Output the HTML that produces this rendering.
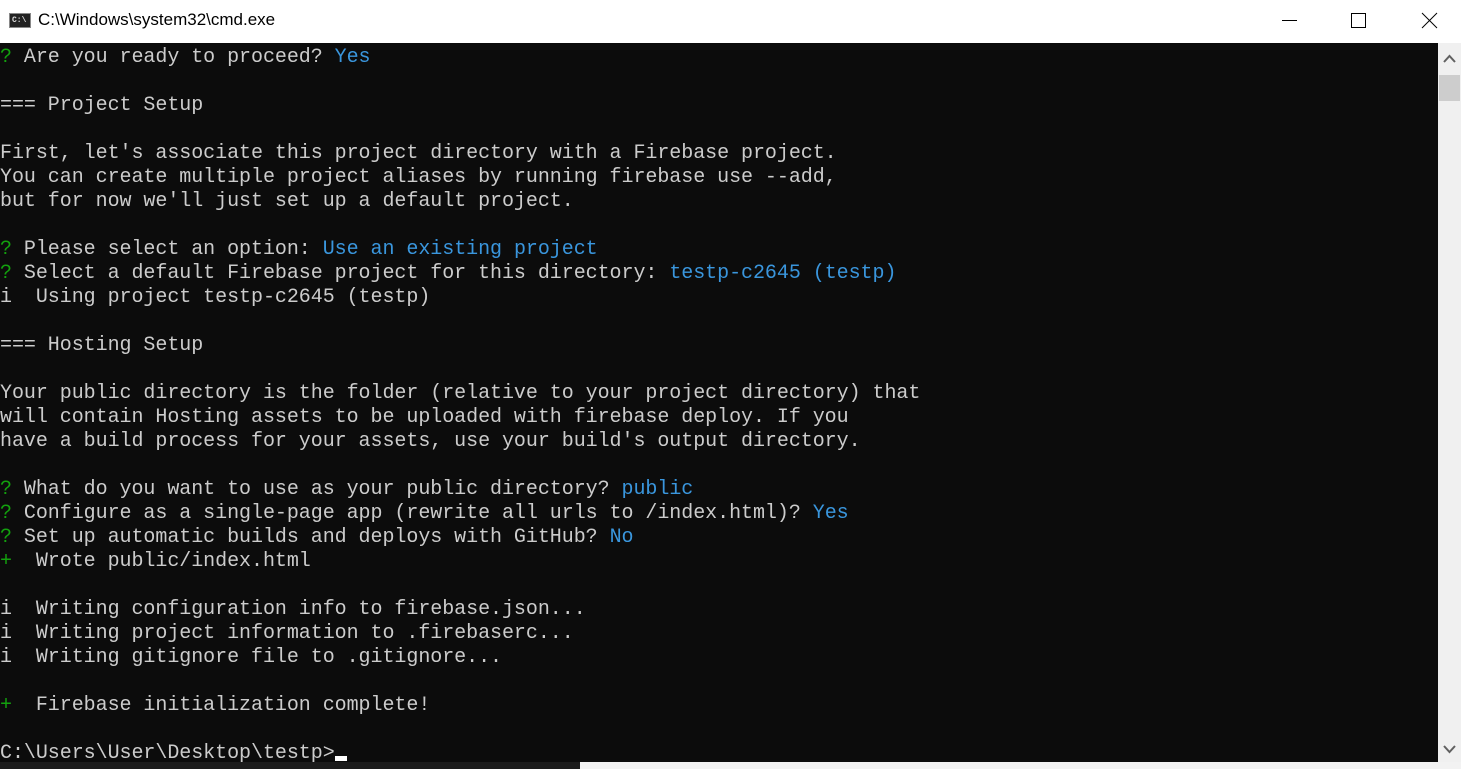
<!DOCTYPE html>
<html><head><meta charset="utf-8"><style>
html,body{margin:0;padding:0;width:1461px;height:769px;overflow:hidden;background:#0c0c0c}
#tb{position:absolute;left:0;top:0;width:1461px;height:43px;background:#fff}
#tt{position:absolute;left:38px;top:10px;font:17px "Liberation Sans",sans-serif;color:#000}
#ic{position:absolute;left:9px;top:13px;width:22px;height:15px;background:#222;border:1px solid #888;box-sizing:border-box;color:#ddd;font:bold 8px "Liberation Mono",monospace;line-height:13px;padding-left:2px}
#term{position:absolute;left:0;top:46px;width:1438px;height:716px;overflow:hidden}
pre{margin:0;font:20px/24px "Liberation Mono","Noto Sans CJK TC",monospace;color:#cccccc;white-space:pre;letter-spacing:-0.05px}
.g{color:#13a10e}.b{color:#3a96dd}
#sb{position:absolute;left:1438px;top:43px;width:23px;height:720px;background:#f0f0f0}
#th{position:absolute;left:1439px;top:75px;width:21px;height:26px;background:#cdcdcd}
#strip{position:absolute;left:0;top:762px;width:1461px;height:7px;background:#1c1c1c}
#strip2{position:absolute;left:580px;top:762px;width:881px;height:7px;background:#f2f2f2}
</style></head><body>
<div id="tb"><div id="ic">C:\</div><div id="tt">C:\Windows\system32\cmd.exe</div>
<svg style="position:absolute;left:1260px;top:0" width="201" height="43">
<line x1="22" y1="20.5" x2="37" y2="20.5" stroke="#000" stroke-width="1"/>
<rect x="91.5" y="13.5" width="14" height="14" fill="none" stroke="#000"/>
<line x1="162" y1="13" x2="177" y2="28" stroke="#000"/><line x1="177" y1="13" x2="162" y2="28" stroke="#000"/>
</svg></div>
<div id="term"><pre><span class="g">?</span> Are you ready to proceed? <span class="b">Yes</span>

=== Project Setup

First, let's associate this project directory with a Firebase project.
You can create multiple project aliases by running firebase use --add,
but for now we'll just set up a default project.

<span class="g">?</span> Please select an option: <span class="b">Use an existing project</span>
<span class="g">?</span> Select a default Firebase project for this directory: <span class="b">testp-c2645 (testp)</span>
i  Using project testp-c2645 (testp)

=== Hosting Setup

Your public directory is the folder (relative to your project directory) that
will contain Hosting assets to be uploaded with firebase deploy. If you
have a build process for your assets, use your build's output directory.

<span class="g">?</span> What do you want to use as your public directory? <span class="b">public</span>
<span class="g">?</span> Configure as a single-page app (rewrite all urls to /index.html)? <span class="b">Yes</span>
<span class="g">?</span> Set up automatic builds and deploys with GitHub? <span class="b">No</span>
<span class="g">+</span>  Wrote public/index.html

i  Writing configuration info to firebase.json...
i  Writing project information to .firebaserc...
i  Writing gitignore file to .gitignore...

<span class="g">+</span>  Firebase initialization complete!

C:\Users\User\Desktop\testp&gt;<span style="display:inline-block;width:12px;height:5px;background:#fff;vertical-align:-3px"></span></pre></div>
<div id="sb"></div><div id="th"></div>
<svg style="position:absolute;left:1441px;top:52px" width="17" height="14"><polyline points="3,10 8.5,4 14,10" fill="none" stroke="#606060" stroke-width="2"/></svg>
<svg style="position:absolute;left:1441px;top:742px" width="17" height="14"><polyline points="3,4 8.5,10 14,4" fill="none" stroke="#606060" stroke-width="2"/></svg>
<div id="strip"></div><div id="strip2"></div>
</body></html>
